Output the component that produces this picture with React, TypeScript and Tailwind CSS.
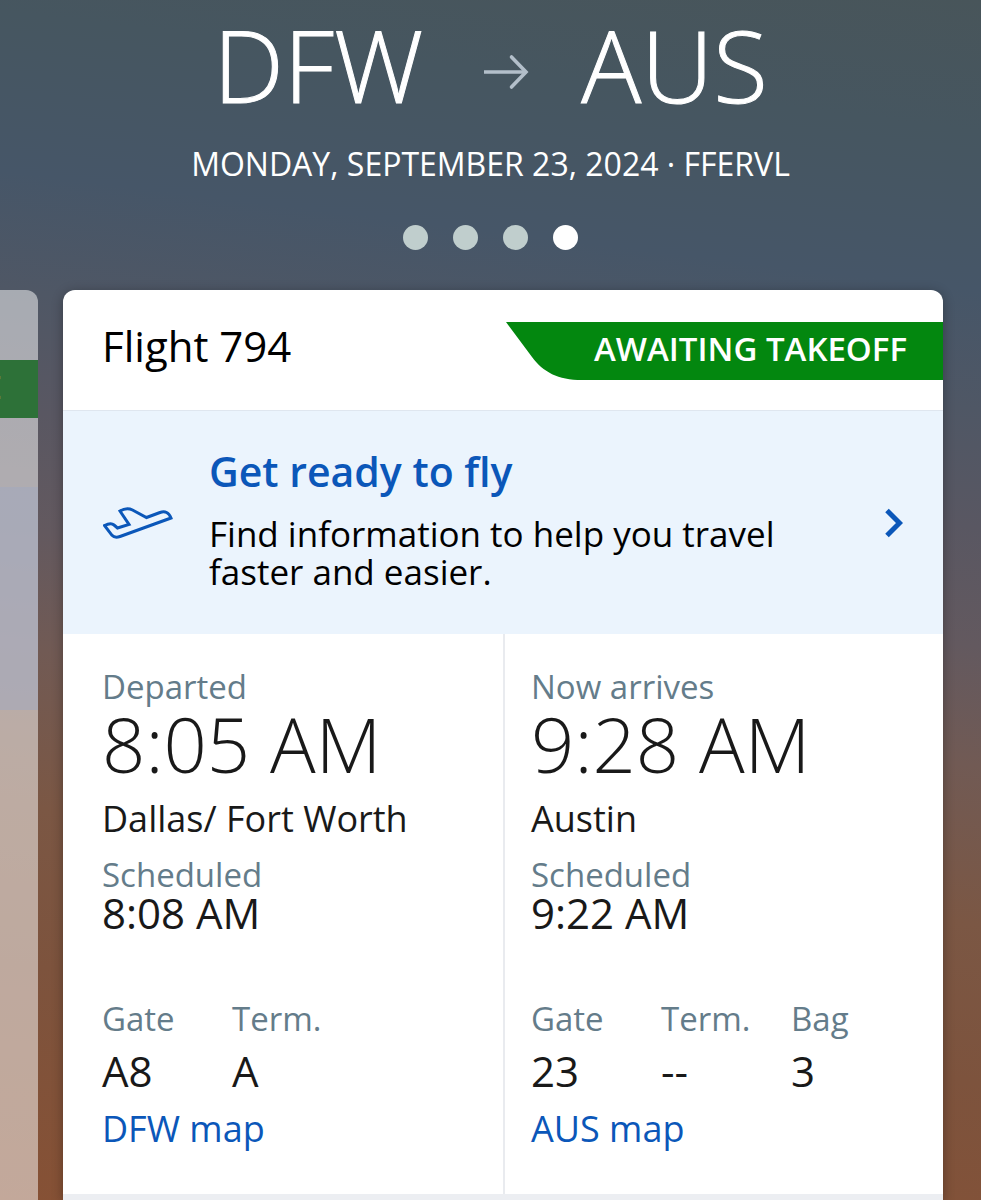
import { useState } from "react";
import clsx from "clsx";

type Detail = { label: string; value: string };

type Leg = {
  status: string;
  time: string;
  city: string;
  scheduled: string;
  details: Detail[];
  airport: string;
};

const departure: Leg = {
  status: "Departed",
  time: "8:05 AM",
  city: "Dallas/ Fort Worth",
  scheduled: "8:08 AM",
  details: [
    { label: "Gate", value: "A8" },
    { label: "Term.", value: "A" },
  ],
  airport: "DFW",
};

const arrival: Leg = {
  status: "Now arrives",
  time: "9:28 AM",
  city: "Austin",
  scheduled: "9:22 AM",
  details: [
    { label: "Gate", value: "23" },
    { label: "Term.", value: "--" },
    { label: "Bag", value: "3" },
  ],
  airport: "AUS",
};

function ArrowIcon() {
  return (
    <svg
      viewBox="0 0 46 36"
      className="mt-4 ml-2 h-9 w-[46px] text-[#b3bfca]"
      fill="none"
      stroke="currentColor"
      strokeWidth="3.6"
      aria-hidden
    >
      <path d="M1 18H43" />
      <path d="M28.500 3L43 18L28.500 33" strokeLinecap="round" />
    </svg>
  );
}

function TakeoffIcon() {
  return (
    <svg
      viewBox="0 0 70 32"
      className="h-8 w-[70px] shrink-0 text-[#0b57b9]"
      fill="none"
      stroke="currentColor"
      strokeWidth="3"
      aria-hidden
    >
      <path d="M1.500 18.500C5 16.800 9 16.300 11 18L14.500 21L26 17.500L17 4C21 1.600 26 1.200 29.500 3L43.500 10.500L57 5.500C62 3.600 66 5.500 68 11L17 29.500C13.500 30.700 11 30.500 9 28.300Z" />
    </svg>
  );
}

function ChevronIcon() {
  return (
    <svg
      viewBox="0 0 18 30"
      className="h-[30px] w-[18px] shrink-0 text-[#0b57b9]"
      fill="none"
      stroke="currentColor"
      strokeWidth="5"
      aria-hidden
    >
      <path d="M2 2.500L14.500 15L2 27.500" />
    </svg>
  );
}

function StatusRibbon({ children }: { children: string }) {
  return (
    <div className="flex h-[58px]">
      <svg viewBox="0 0 76 58" className="h-[58px] w-[76px] text-[#03870f]" fill="currentColor" aria-hidden>
        <path d="M0 0H76V58C52 58 37 50 26 35Z" />
      </svg>
      <p className="bg-[#03870f] pr-9 pl-3 text-[33px] leading-[54px] font-semibold text-white">{children}</p>
    </div>
  );
}

function LegColumn({ leg, className }: { leg: Leg; className?: string }) {
  return (
    <section className={clsx("min-w-0 pt-[33px] pb-[43px] text-[#191919]", className)}>
      <p className="text-[33px] leading-10 text-[#647c8a]">{leg.status}</p>
      <p className="text-[76px] leading-[74px] font-light">{leg.time}</p>
      <p className="mt-4 text-[36px] leading-[44px]">{leg.city}</p>
      <p className="mt-[14px] text-[33px] leading-10 text-[#647c8a]">Scheduled</p>
      <p className="text-[42px] leading-9">{leg.scheduled}</p>
      <dl className="mt-[68px] flex">
        {leg.details.map((detail) => (
          <div key={detail.label} className="w-[130px]">
            <dt className="text-[33px] leading-10 text-[#647c8a]">{detail.label}</dt>
            <dd className="mt-2 text-[42px] leading-[48px]">{detail.value}</dd>
          </div>
        ))}
      </dl>
      <a href="#map" className="mt-3 inline-block text-[36px] leading-[44px] text-[#0b57b9]">
        {leg.airport} map
      </a>
    </section>
  );
}

// Edge of the previous flight's card, peeking in from the left.
function PreviousCard() {
  return (
    <div className="flex w-[38px] shrink-0 flex-col overflow-hidden rounded-tr-xl bg-white/50">
      <div className="h-[70px]" />
      <div className="flex h-[58px] justify-end bg-[#2d7138] pr-9 text-[33px] leading-[54px] font-semibold text-white/60">
        E
      </div>
      <div className="h-[69px]" />
      <div className="h-[223px] bg-[#a0a8c0]/50" />
    </div>
  );
}

export default function App() {
  const [active, setActive] = useState(3);

  return (
    <div className="flex min-h-screen flex-col overflow-hidden bg-[linear-gradient(187deg,#48555a_0%,#465660_10%,#465668_22%,#4f5765_31%,#595762_40%,#63595f_49%,#715a54_58%,#7b5744_70%,#7d533d_82%,#865135_100%)] font-['Open_Sans','Noto_Sans',sans-serif]">
      <header className="flex flex-col items-center pt-2 text-white">
        <h1 className="flex items-center gap-[52px] text-[100px] leading-[112px] font-light [-webkit-text-stroke:1px_white]">
          <span>DFW</span>
          <ArrowIcon />
          <span>AUS</span>
        </h1>
        <p className="mt-6 text-[32px] leading-10">MONDAY, SEPTEMBER 23, 2024 · FFERVL</p>
        <nav className="mt-[41px] flex gap-[25px]" aria-label="Flights">
          {[0, 1, 2, 3].map((index) => (
            <button
              key={index}
              type="button"
              aria-label={`Flight ${index + 1}`}
              aria-current={index === active}
              onClick={() => setActive(index)}
              className={clsx("size-[25px] rounded-full", index === active ? "bg-white" : "bg-[#c0cecd]")}
            />
          ))}
        </nav>
      </header>

      <main className="mt-10 flex flex-1 gap-[25px] pr-[38px]">
        <PreviousCard />
        <article className="flex min-w-0 flex-1 flex-col overflow-hidden rounded-t-xl bg-white shadow-[0_2px_12px_rgba(0,0,0,0.3)]">
          <div className="flex items-start justify-between border-b border-[#dfe6ef] pt-8 pb-[30px] pl-[39px]">
            <h2 className="text-[42px] leading-[48px] text-black">Flight 794</h2>
            <StatusRibbon>AWAITING TAKEOFF</StatusRibbon>
          </div>

          <a href="#ready" className="flex items-center gap-9 bg-[#ebf4fd] px-10">
            <TakeoffIcon />
            <div className="min-w-0 flex-1 pt-9 pb-[43px]">
              <h3 className="text-[41px] leading-[48px] font-semibold text-[#0b57b9]">Get ready to fly</h3>
              <p className="mt-5 max-w-[620px] text-[35px] leading-[38px] text-black">
                Find information to help you travel faster and easier.
              </p>
            </div>
            <ChevronIcon />
          </a>

          <div className="grid grid-cols-2">
            <LegColumn leg={departure} className="pl-[39px]" />
            <LegColumn leg={arrival} className="border-l-2 border-[#e9ebef] pl-[26px]" />
          </div>
          <div className="min-h-1 flex-1 bg-[#eceef2]" />
        </article>
      </main>
    </div>
  );
}
